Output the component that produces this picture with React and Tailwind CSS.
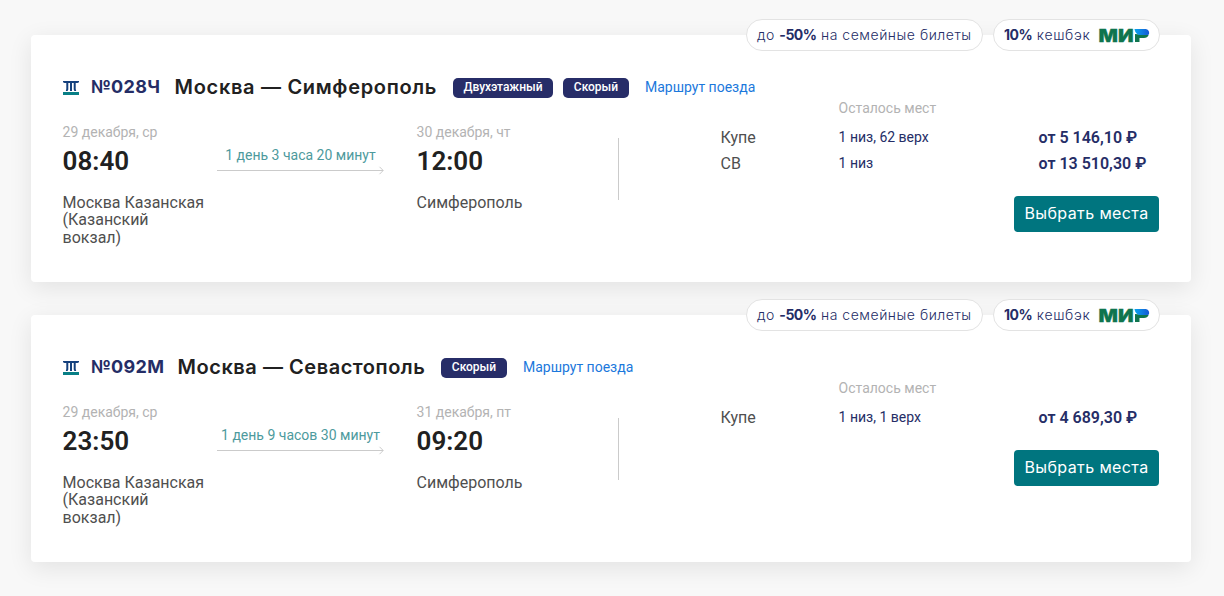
import React from "react";

const trains = [
  {
    number: "№028Ч",
    numberClass: "w-[70px] tracking-[0.3px]",
    route: "Москва — Симферополь",
    routeClass: "w-[264px] tracking-[0.68px]",
    tags: [
      { text: "Двухэтажный", className: "w-[100px]" },
      { text: "Скорый", className: "w-[66px]" },
    ],
    from: { date: "29 декабря, ср", time: "08:40", station: "Москва Казанская (Казанский вокзал)" },
    to: { date: "30 декабря, чт", time: "12:00", station: "Симферополь" },
    duration: "1 день 3 часа 20 минут",
    seats: [
      { type: "Купе", left: "1 низ, 62 верх", price: "от 5 146,10 ₽" },
      { type: "СВ", left: "1 низ", price: "от 13 510,30 ₽" },
    ],
  },
  {
    number: "№092М",
    numberClass: "w-[73px] tracking-[0.3px]",
    route: "Москва — Севастополь",
    routeClass: "w-[249px] tracking-[0.53px]",
    tags: [{ text: "Скорый", className: "w-[66px]" }],
    from: { date: "29 декабря, ср", time: "23:50", station: "Москва Казанская (Казанский вокзал)" },
    to: { date: "31 декабря, пт", time: "09:20", station: "Симферополь" },
    duration: "1 день 9 часов 30 минут",
    seats: [{ type: "Купе", left: "1 низ, 1 верх", price: "от 4 689,30 ₽" }],
  },
];

function CarrierIcon() {
  return (
    <svg width="16" height="14" viewBox="0 0 16 14" className="shrink-0">
      <path d="M0 0h16v1.200L14.500 2h-13L0 1.200z" fill="#14407c" />
      <path d="M3.300 2h2v6.500L4.600 10H2.800l.5-2zM7 2h2v8H7zM10.700 2h2v6l.5 2h-1.800l-.7-1.500z" fill="#14407c" />
      <path d="M0 11h16v3H0z" fill="#087f86" />
    </svg>
  );
}

function MirLogo() {
  return (
    <svg width="51" height="15" viewBox="0 0 51 15" className="shrink-0 overflow-visible">
      <defs>
        <linearGradient id="mir" x1="0" x2="1">
          <stop offset="0" stopColor="#08a5ee" />
          <stop offset="1" stopColor="#1658d4" />
        </linearGradient>
      </defs>
      <text
        x="-0.5"
        y="13.8"
        textLength="35"
        lengthAdjust="spacingAndGlyphs"
        fill="#0f754e"
        stroke="#0f754e"
        strokeWidth="0.3"
        className="font-['Inter',sans-serif] text-[17.5px] font-black"
      >
        МИ
      </text>
      <path d="M36 6v8h4.500v-4H45c2.200 0 4-1.300 4.600-3z" fill="#0f754e" />
      <path d="M35.500 1H46c3 0 4.600 2.200 4 5.200-.3.500-1 .8-1.500.8H41c-2.800 0-5-2.400-5.500-6z" fill="url(#mir)" />
    </svg>
  );
}

function Promo() {
  return (
    <div className="absolute -top-4 right-[31px] flex gap-2.5 whitespace-nowrap font-['Inter',sans-serif] text-[14px] font-light text-[#252d66]">
      <div className="flex h-8 w-[237px] items-center rounded-full border border-[#e3e3e3] bg-white pl-2.5">
        <span className="pb-0.5 tracking-[0.52px]">
          до <b className="font-bold tracking-[-0.5px]">-50%</b> на семейные билеты
        </span>
      </div>
      <div className="flex h-8 w-[167px] items-center rounded-full border border-[#e3e3e3] bg-white pl-2.5">
        <span className="w-[95px] pb-0.5 tracking-[0.65px]">
          <b className="font-bold tracking-[-0.5px]">10%</b> кешбэк
        </span>
        <MirLogo />
      </div>
    </div>
  );
}

function Point({ point, className }) {
  return (
    <div className={className}>
      <div className="h-[18px] text-[14px] leading-[18px] text-[#b3b3b3]">{point.date}</div>
      <div className="mt-[3px] h-[34px] text-[26px] font-semibold leading-[34px] text-[#212121]">{point.time}</div>
      <div className="mt-[15.6px] w-[142px] text-[16px] leading-[17.6px] text-[#4f4f4f]">{point.station}</div>
    </div>
  );
}

function TrainCard({ train }) {
  return (
    <div className="relative h-[247px] rounded-[4px] bg-white pl-[31.6px] pr-8 pt-[42px] shadow-[0_6px_24px_rgba(0,0,0,0.09)]">
      <Promo />

      <div className="flex h-[21px] items-center whitespace-nowrap">
        <CarrierIcon />
        <span className={`ml-[12.4px] shrink-0 pb-0.5 font-['Inter',sans-serif] text-[18px] font-bold text-[#252d66] ${train.numberClass}`}>
          {train.number}
        </span>
        <span className={`ml-[13.6px] shrink-0 pb-0.5 font-['Inter',sans-serif] text-[20px] font-semibold text-[#212121] ${train.routeClass}`}>
          {train.route}
        </span>
        <div className="ml-[14.4px] flex gap-2.5">
          {train.tags.map((tag) => (
            <span
              key={tag.text}
              className={`mt-px h-5 rounded-[5px] bg-[#272d68] text-center text-[12px] font-medium leading-[18px] text-white ${tag.className}`}
            >
              {tag.text}
            </span>
          ))}
        </div>
        <a href="#" className="ml-4 text-[14px] text-[#1b78dc]">
          Маршрут поезда
        </a>
      </div>

      <div className="flex pt-[2px]">
        <Point point={train.from} className="w-[154.4px] pt-[23px]" />

        {/* Travel time */}
        <div className="mr-[32.6px] w-[167px] pt-[46px] text-center text-[14px] leading-[18px] text-[#4d9a9d]">
          <div className="whitespace-nowrap">{train.duration}</div>
          <svg width="167" height="9" viewBox="0 0 167 9" fill="none" stroke="#cbcbcb" className="mt-0.5">
            <path d="M0 4.500h166M162.500.8l3.700 3.700-3.700 3.700" />
          </svg>
        </div>

        <Point point={train.to} className="w-[201.4px] pt-[23px]" />
        <div className="mr-[101.6px] mt-[38px] h-[62px] w-px bg-[#cbcbcb]" />

        {/* Seats and prices */}
        <div className="flex flex-1 flex-col text-[#252d66]">
          <div className="ml-[118px] h-4 text-[14px] leading-4 text-[#b3b3b3]">Осталось мест</div>
          <div className="mt-2">
            {train.seats.map((seat) => (
              <div key={seat.type} className="flex h-[26px] items-center whitespace-nowrap">
                <span className="w-[118px] pt-0.5 text-[16px] text-[#4f4f4f]">{seat.type}</span>
                <span className="w-[200px] text-[14px]">{seat.left}</span>
                <span className="pt-0.5 text-[16px] font-semibold">{seat.price}</span>
              </div>
            ))}
          </div>
          <button className="mt-5 h-9 w-[145px] self-end whitespace-nowrap rounded-[4px] bg-[#00757f] pb-0.5 font-['Inter',sans-serif] text-[16px] tracking-[0.4px] text-white">
            Выбрать места
          </button>
        </div>
      </div>
    </div>
  );
}

export default function App() {
  return (
    <div className="flex h-[596px] flex-col gap-[33px] overflow-hidden bg-[#f8f8f8] pl-[31px] pr-[33px] pt-[35px] font-['Roboto',sans-serif]">
      {trains.map((train) => (
        <TrainCard key={train.number} train={train} />
      ))}
    </div>
  );
}
